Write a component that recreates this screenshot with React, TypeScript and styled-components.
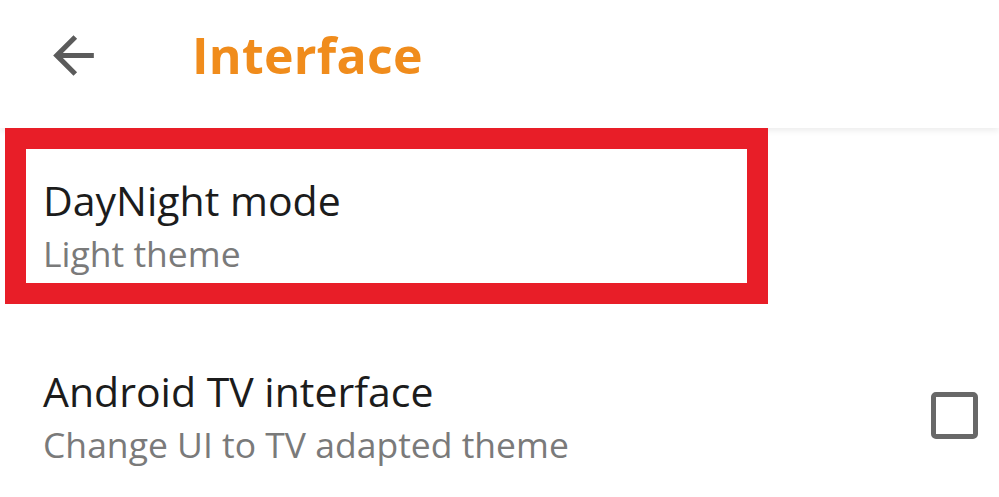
import styled, { createGlobalStyle } from "styled-components";

const Global = createGlobalStyle`
    html, body {
        margin: 0;
        padding: 0;
        background: #ffffff;
    }
    body {
        font-family: "Open Sans", "Noto Sans", sans-serif;
        overflow: hidden;
    }
`;

const Page = styled.div`
    width: 999px;
    height: 497px;
    background: #ffffff;
    display: flex;
    flex-direction: column;
`;

const Toolbar = styled.div`
    height: 128px;
    box-sizing: border-box;
    padding: 0 0 18px 43px;
    display: flex;
    align-items: center;
    gap: 88px;
    box-shadow: 0 3px 6px rgba(0, 0, 0, 0.07);
    position: relative;
`;

const BackButton = styled.div`
    width: 61px;
    height: 61px;
    display: flex;
    color: #5b5b5b;
`;

const Title = styled.div`
    font-family: "Open Sans", sans-serif;
    font-weight: 700;
    font-size: 50px;
    line-height: 60px;
    color: #f08c1c;
    letter-spacing: 0.3px;
`;

const Highlight = styled.div`
    margin-left: 5px;
    width: 763px;
    height: 176px;
    box-sizing: border-box;
    border: 21px solid #e81e28;
    background: #ffffff;
    position: relative;
    z-index: 1;
    padding: 27px 0 0 17px;
`;

const Row = styled.div`
    flex: 1;
    display: flex;
    align-items: center;
    justify-content: space-between;
    padding: 63px 21px 33px 43px;
`;

const Texts = styled.div`
    display: flex;
    flex-direction: column;
`;

const Primary = styled.div`
    font-size: 41px;
    line-height: 48px;
    color: #1c1c1c;
`;

const Secondary = styled.div`
    font-size: 35.5px;
    line-height: 40px;
    margin-top: 9px;
    color: #7a7a7a;
`;

const Checkbox = styled.div`
    width: 47px;
    height: 47px;
    box-sizing: border-box;
    border: 5px solid #686868;
    border-radius: 5px;
`;

const Pref = ({ title, summary }: { title: string; summary: string }) => (
    <Texts>
        <Primary>{title}</Primary>
        <Secondary>{summary}</Secondary>
    </Texts>
);

export default function App() {
    return (
        <Page>
            <Global />
            <Toolbar>
                <BackButton>
                    <svg width="61" height="61" viewBox="0 0 24 24" fill="currentColor">
                        <path d="M20 11H7.83l5.59-5.59L12 4l-8 8 8 8 1.41-1.41L7.83 13H20v-2z" />
                    </svg>
                </BackButton>
                <Title>Interface</Title>
            </Toolbar>
            <Highlight>
                <Pref title="DayNight mode" summary="Light theme" />
            </Highlight>
            <Row>
                <Pref title="Android TV interface" summary="Change UI to TV adapted theme" />
                <Checkbox />
            </Row>
        </Page>
    );
}
